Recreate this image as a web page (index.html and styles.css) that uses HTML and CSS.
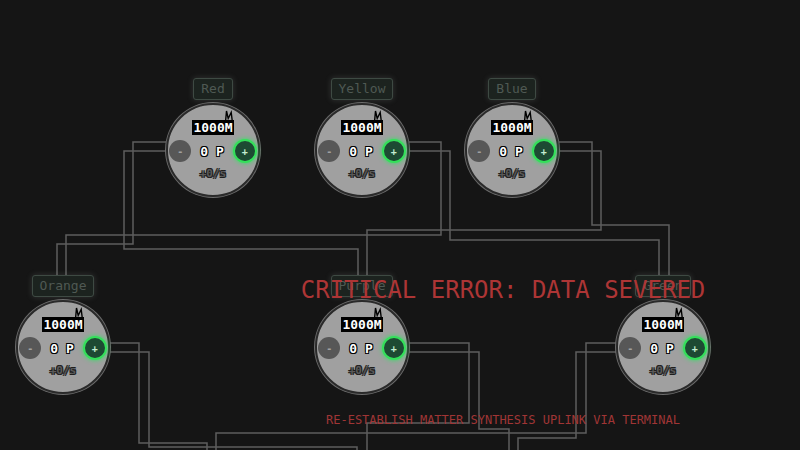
FILE: index.html
```html
<!DOCTYPE html>
<html lang="en">
<head>
<meta charset="utf-8">
<title>Matter Synthesis Grid</title>
<link rel="stylesheet" href="styles.css">
</head>
<body>
<div class="canvas">
  <svg class="wires" width="800" height="450" viewBox="0 0 800 450">
    <polyline points="180,142 133,142 133,244 57,244 57,280"/>
    <polyline points="180,151 124,151 124,249 358,249 358,280"/>
    <polyline points="395,142 441,142 441,235 66,235 66,280"/>
    <polyline points="395,151 450,151 450,240 659,240 659,280"/>
    <polyline points="545,142 592,142 592,225 669,225 669,280"/>
    <polyline points="545,151 601,151 601,230 367,230 367,280"/>
    <polyline points="95,343 139,343 139,443 207,443 207,455"/>
    <polyline points="95,352 149,352 149,447 357,447 357,455"/>
    <polyline points="395,343 469,343 469,423 367,423 367,455"/>
    <polyline points="395,352 479,352 479,429 509,429 509,455"/>
    <polyline points="630,343 586,343 586,433 216,433 216,455"/>
    <polyline points="630,352 576,352 576,438 518,438 518,455"/>
  </svg>

  <div class="node n-red">
    <div class="label">Red</div>
    <div class="core">
      <div class="value">1000M<svg class="crown" viewBox="0 0 10 12" width="10" height="12"><polyline points="1.5,12 2.5,1 4.2,8.5 7.2,2.5 8.4,12"/></svg></div>
      <div class="row"><span class="btn minus">-</span><span class="count">0 P</span><span class="btn plus">+</span></div>
      <div class="rate">+0/s</div>
    </div>
  </div>

  <div class="node n-yellow">
    <div class="label">Yellow</div>
    <div class="core">
      <div class="value">1000M<svg class="crown" viewBox="0 0 10 12" width="10" height="12"><polyline points="1.5,12 2.5,1 4.2,8.5 7.2,2.5 8.4,12"/></svg></div>
      <div class="row"><span class="btn minus">-</span><span class="count">0 P</span><span class="btn plus">+</span></div>
      <div class="rate">+0/s</div>
    </div>
  </div>

  <div class="node n-blue">
    <div class="label">Blue</div>
    <div class="core">
      <div class="value">1000M<svg class="crown" viewBox="0 0 10 12" width="10" height="12"><polyline points="1.5,12 2.5,1 4.2,8.5 7.2,2.5 8.4,12"/></svg></div>
      <div class="row"><span class="btn minus">-</span><span class="count">0 P</span><span class="btn plus">+</span></div>
      <div class="rate">+0/s</div>
    </div>
  </div>

  <div class="node n-orange">
    <div class="label">Orange</div>
    <div class="core">
      <div class="value">1000M<svg class="crown" viewBox="0 0 10 12" width="10" height="12"><polyline points="1.5,12 2.5,1 4.2,8.5 7.2,2.5 8.4,12"/></svg></div>
      <div class="row"><span class="btn minus">-</span><span class="count">0 P</span><span class="btn plus">+</span></div>
      <div class="rate">+0/s</div>
    </div>
  </div>

  <div class="node n-purple">
    <div class="label">Purple</div>
    <div class="core">
      <div class="value">1000M<svg class="crown" viewBox="0 0 10 12" width="10" height="12"><polyline points="1.5,12 2.5,1 4.2,8.5 7.2,2.5 8.4,12"/></svg></div>
      <div class="row"><span class="btn minus">-</span><span class="count">0 P</span><span class="btn plus">+</span></div>
      <div class="rate">+0/s</div>
    </div>
  </div>

  <div class="node n-green">
    <div class="label">Green</div>
    <div class="core">
      <div class="value">1000M<svg class="crown" viewBox="0 0 10 12" width="10" height="12"><polyline points="1.5,12 2.5,1 4.2,8.5 7.2,2.5 8.4,12"/></svg></div>
      <div class="row"><span class="btn minus">-</span><span class="count">0 P</span><span class="btn plus">+</span></div>
      <div class="rate">+0/s</div>
    </div>
  </div>

  <div class="alert">
    <div class="alert-title">CRITICAL ERROR: DATA SEVERED</div>
    <div class="alert-sub">RE-ESTABLISH MATTER SYNTHESIS UPLINK VIA TERMINAL</div>
  </div>
</div>
</body>
</html>
```

FILE: styles.css
```css
* { box-sizing: border-box; }

html, body {
  margin: 0;
  padding: 0;
  background: #151515;
}

body {
  font-family: "DejaVu Sans Mono", "Liberation Mono", monospace;
  overflow: hidden;
}

.canvas {
  position: relative;
  width: 800px;
  height: 450px;
  overflow: hidden;
  background: #151515;
}

.wires {
  position: absolute;
  left: 0;
  top: 0;
}

.wires polyline {
  fill: none;
  stroke: #5e5e5e;
  stroke-width: 1.5;
}

.node {
  position: absolute;
  width: 96px;
  display: flex;
  flex-direction: column;
  align-items: center;
  gap: 3px;
}

.n-red    { left: 165px; top: 78px; }
.n-yellow { left: 314px; top: 78px; }
.n-blue   { left: 464px; top: 78px; }
.n-orange { left: 15px;  top: 275px; }
.n-purple { left: 314px; top: 275px; }
.n-green  { left: 615px; top: 275px; }

.label {
  height: 22px;
  padding: 0 7px;
  border: 1px solid #3e4a43;
  border-radius: 3px;
  background: #1c231f;
  color: #4f5953;
  font-size: 13px;
  line-height: 20px;
  box-shadow: 0 0 6px rgba(190, 200, 195, 0.18);
}

.core {
  width: 94px;
  height: 94px;
  border-radius: 50%;
  background: #a0a0a0;
  border: 2px solid #2a2a2a;
  box-shadow: 0 0 0 1px #6c6c6c;
  display: flex;
  flex-direction: column;
  align-items: center;
  justify-content: center;
  gap: 4px;
}

.value {
  position: relative;
  font-size: 13px;
  font-weight: bold;
  line-height: 15px;
  color: #fff;
  text-shadow: -1px -1px 0 #000, 1px -1px 0 #000, -1px 1px 0 #000, 1px 1px 0 #000,
               0 -1.5px 0 #000, 0 1.5px 0 #000, -1.5px 0 0 #000, 1.5px 0 0 #000;
  background: #000;
  padding: 0 1px;
}

.crown {
  position: absolute;
  right: 0;
  top: -10px;
}

.crown polyline {
  fill: none;
  stroke: #000;
  stroke-width: 1.4;
  stroke-linejoin: miter;
}

.row {
  display: flex;
  align-items: center;
  gap: 9px;
  height: 24px;
}

.btn {
  display: flex;
  align-items: center;
  justify-content: center;
  border-radius: 50%;
  font-size: 10px;
  font-weight: bold;
}

.minus {
  width: 22px;
  height: 22px;
  background: #575757;
  color: #a0a0a0;
}

.plus {
  width: 24px;
  height: 24px;
  background: #1d4a33;
  border: 2px solid #34e05a;
  color: #c4ecd0;
  box-shadow: 0 0 5px #2fe660;
}

.count {
  font-size: 13px;
  font-weight: bold;
  color: #fff;
  text-shadow: -1px -1px 0 #000, 1px -1px 0 #000, -1px 1px 0 #000, 1px 1px 0 #000;
}

.rate {
  font-size: 11px;
  font-weight: bold;
  line-height: 13px;
  color: #5a5a5a;
  text-shadow: -1px -1px 0 #1e1e1e, 1px -1px 0 #1e1e1e, -1px 1px 0 #1e1e1e, 1px 1px 0 #1e1e1e;
}

.alert {
  position: absolute;
  left: 206px;
  right: 0;
  top: 276px;
  display: flex;
  flex-direction: column;
  align-items: center;
  gap: 109px;
  pointer-events: none;
}

.alert-title {
  font-size: 24px;
  line-height: 28px;
  color: #ad3535;
  white-space: nowrap;
}

.alert-sub {
  font-size: 12px;
  line-height: 14px;
  color: #a03535;
  white-space: nowrap;
}
```
